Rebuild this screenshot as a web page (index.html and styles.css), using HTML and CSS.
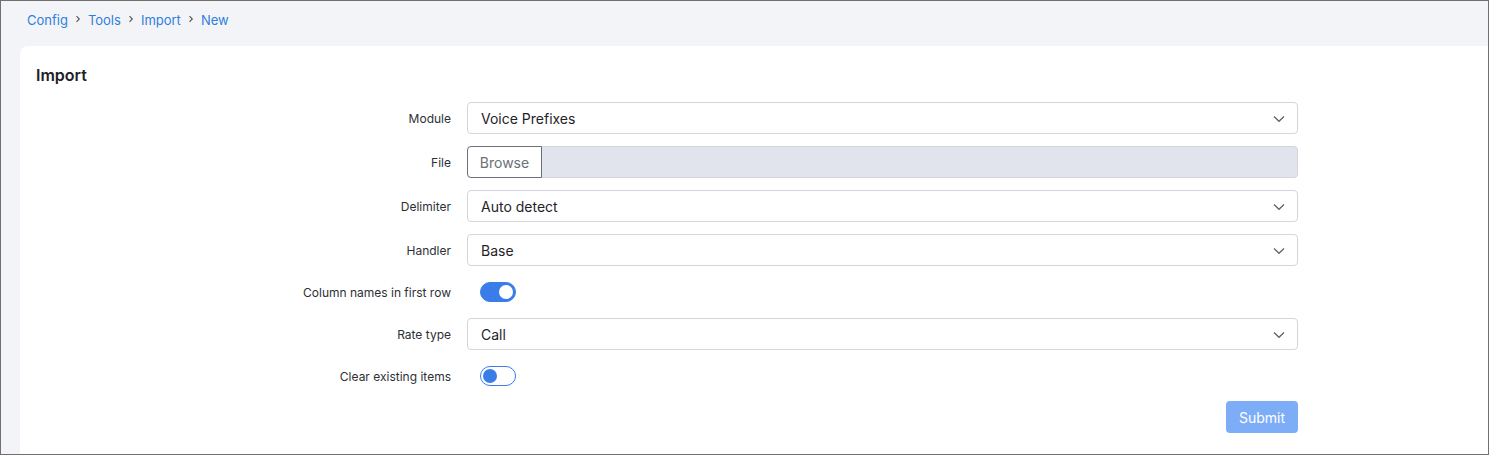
FILE: index.html
```html
<!DOCTYPE html>
<html>
<head>
<meta charset="utf-8">
<link rel="stylesheet" href="styles.css">
</head>
<body>
<div class="frame">
  <nav class="crumbs">
    <a>Config</a><span class="sep"><svg width="8" height="8" viewBox="0 0 8 8"><path d="M2.5 1.2 5.3 4 2.5 6.8" fill="none" stroke="#555" stroke-width="1.1"/></svg></span>
    <a>Tools</a><span class="sep"><svg width="8" height="8" viewBox="0 0 8 8"><path d="M2.5 1.2 5.3 4 2.5 6.8" fill="none" stroke="#555" stroke-width="1.1"/></svg></span>
    <a>Import</a><span class="sep"><svg width="8" height="8" viewBox="0 0 8 8"><path d="M2.5 1.2 5.3 4 2.5 6.8" fill="none" stroke="#555" stroke-width="1.1"/></svg></span>
    <a>New</a>
  </nav>
  <section class="card">
    <h1 class="title">Import</h1>
    <form class="form">
      <label class="lbl">Module</label>
      <div class="select"><span>Voice Prefixes</span><svg class="chev" width="12" height="8" viewBox="0 0 12 8"><path d="M1 1.5 6 6.3 11 1.5" fill="none" stroke="#5a6270" stroke-width="1.2"/></svg></div>

      <label class="lbl">File</label>
      <div class="file"><span class="browse">Browse</span><span class="fname"></span></div>

      <label class="lbl">Delimiter</label>
      <div class="select"><span>Auto detect</span><svg class="chev" width="12" height="8" viewBox="0 0 12 8"><path d="M1 1.5 6 6.3 11 1.5" fill="none" stroke="#5a6270" stroke-width="1.2"/></svg></div>

      <label class="lbl">Handler</label>
      <div class="select"><span>Base</span><svg class="chev" width="12" height="8" viewBox="0 0 12 8"><path d="M1 1.5 6 6.3 11 1.5" fill="none" stroke="#5a6270" stroke-width="1.2"/></svg></div>

      <label class="lbl short">Column names in first row</label>
      <div class="tog-row"><span class="toggle on"><span class="knob"></span></span></div>

      <label class="lbl">Rate type</label>
      <div class="select"><span>Call</span><svg class="chev" width="12" height="8" viewBox="0 0 12 8"><path d="M1 1.5 6 6.3 11 1.5" fill="none" stroke="#5a6270" stroke-width="1.2"/></svg></div>

      <label class="lbl short">Clear existing items</label>
      <div class="tog-row"><span class="toggle off"><span class="knob"></span></span></div>

      <span></span>
      <div class="actions"><button type="button" class="submit">Submit</button></div>
    </form>
  </section>
</div>
</body>
</html>
```
FILE: styles.css
```css
* { box-sizing: border-box; }
html, body { margin: 0; padding: 0; }
body {
  font-family: Inter, "Noto Sans", "Liberation Sans", sans-serif;
  color: #212529;
}
.frame {
  width: 1489px;
  height: 455px;
  border: 1px solid #707070;
  background: #f3f4f8;
  overflow: hidden;
}
.crumbs {
  display: flex;
  align-items: center;
  height: 18px;
  margin: 10px 0 0 26px;
  font-size: 13px;
  line-height: 18px;
}
.crumbs a { color: #2f7fdd; }
.crumbs .sep { display: inline-flex; width: 20px; justify-content: center; align-items: center; padding-bottom: 2px; }
.card {
  margin: 17px 0 0 19px;
  background: #fff;
  border-radius: 8px 0 0 0;
  padding: 17px 16px 30px 16px;
  height: 420px;
}
.title {
  margin: 0 0 15px 0;
  font-size: 16px;
  font-weight: 600;
  line-height: 24px;
  color: #1d2026;
}
.form {
  display: grid;
  grid-template-columns: 415px 831px;
  column-gap: 16px;
  row-gap: 12px;
}
.lbl {
  display: flex;
  align-items: center;
  justify-content: flex-end;
  height: 32px;
  font-size: 12px;
  color: #2d3036;
}
.lbl.short { height: 28px; }
.select {
  height: 32px;
  border: 1px solid #d3d6dc;
  border-radius: 4px;
  display: flex;
  align-items: center;
  justify-content: space-between;
  padding: 0 12px 0 13px;
  font-size: 14px;
  color: #1f2329;
}
.chev { margin-top: 1px; }
.file {
  height: 32px;
  display: flex;
  border-radius: 4px;
  background: #e1e4ec;
  border: 1px solid #d3d6dc;
}
.browse {
  margin: -1px 0 -1px -1px;
  width: 75px;
  border: 1px solid #6b7079;
  border-radius: 4px 0 0 4px;
  background: #fff;
  color: #6b7079;
  font-size: 14px;
  display: flex;
  align-items: center;
  justify-content: center;
}
.fname { flex: 1; }
.tog-row {
  height: 28px;
  display: flex;
  align-items: center;
  padding-left: 13px;
}
.toggle {
  width: 36px;
  height: 20px;
  border-radius: 10px;
  display: flex;
  align-items: center;
}
.toggle.on { background: #3a7de9; border: 1px solid #3a7de9; justify-content: flex-end; padding-right: 2px; }
.toggle.off { background: #fff; border: 1px solid #3a7de9; padding-left: 2px; }
.knob { width: 14px; height: 14px; border-radius: 50%; }
.toggle.on .knob { background: #fff; }
.toggle.off .knob { background: #3a7de9; }
.actions {
  display: flex;
  justify-content: flex-end;
  margin-top: -1px;
}
.submit {
  width: 72px;
  height: 32px;
  border: none;
  border-radius: 4px;
  background: #7eadf8;
  color: #fff;
  font-family: inherit;
  font-size: 14px;
}
```
